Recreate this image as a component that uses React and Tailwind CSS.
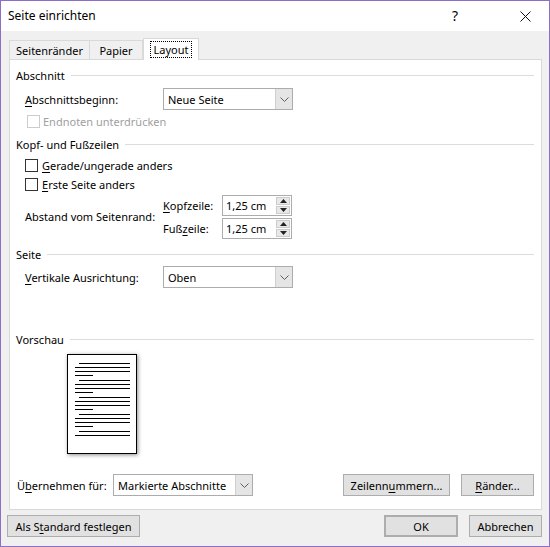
import React from "react";

function U({ children }) {
    return <span className="underline underline-offset-2">{children}</span>;
}

function Heading({ children, className = "" }) {
    return (
        <div className={"flex items-center h-[16px] " + className}>
            <span>{children}</span>
            <div className="flex-1 h-px bg-[#dcdcdc] ml-[6px]" />
        </div>
    );
}

function Chevron() {
    return (
        <svg width="9" height="5" viewBox="0 0 9 5">
            <path d="M0.5 0.5 L4.5 4.5 L8.5 0.5" fill="none" stroke="#606060" strokeWidth="1" />
        </svg>
    );
}

function Select({ value, className = "" }) {
    return (
        <div className={"flex h-[22px] border border-[#acacac] bg-white " + className}>
            <div className="flex-1 flex items-center pl-[4px]">{value}</div>
            <div className="w-[17px] flex items-center justify-center bg-[#e5e5e5] border-l border-[#d0d0d0]">
                <Chevron />
            </div>
        </div>
    );
}

function Spin({ value }) {
    return (
        <div className="flex w-[70px] h-[21px] border border-[#acacac] bg-white">
            <div className="flex-1 flex items-center pl-[3px]">{value}</div>
            <div className="w-[15px] flex flex-col gap-px py-[1px] pr-[1px]">
                <div className="flex-1 bg-[#e8e8e8] border border-[#cccccc] flex items-center justify-center">
                    <svg width="7" height="4" viewBox="0 0 7 4"><path d="M0 4 L3.5 0 L7 4 Z" fill="#222" /></svg>
                </div>
                <div className="flex-1 bg-[#e8e8e8] border border-[#cccccc] flex items-center justify-center">
                    <svg width="7" height="4" viewBox="0 0 7 4"><path d="M0 0 L3.5 4 L7 0 Z" fill="#222" /></svg>
                </div>
            </div>
        </div>
    );
}

function Check({ disabled }) {
    return (
        <div
            className={
                "w-[13px] h-[13px] border bg-white shrink-0 " +
                (disabled ? "border-[#cccccc]" : "border-[#333333]")
            }
        />
    );
}

function Button({ children, className = "" }) {
    return (
        <div
            className={
                "h-[22px] flex items-center justify-center bg-[#e1e1e1] border border-[#adadad] " +
                className
            }
        >
            {children}
        </div>
    );
}

function PreviewPage() {
    const group = (
        <div className="flex flex-col gap-[3px] mb-[4px]">
            <div className="h-px bg-black ml-[11px] w-[51px]" />
            <div className="h-px bg-black ml-[7px] w-[55px]" />
            <div className="h-px bg-black ml-[7px] w-[55px]" />
            <div className="h-px bg-black ml-[7px] w-[18px]" />
        </div>
    );
    return (
        <div className="ml-[51px] mt-[7px] w-[70px] h-[100px] border border-black bg-white shadow-[1px_1px_4px_rgba(0,0,0,0.45)] pt-[8px] overflow-hidden">
            {group}
            {group}
            {group}
            {group}
            <div className="flex flex-col gap-[3px]">
                <div className="h-px bg-black ml-[11px] w-[51px]" />
                <div className="h-px bg-black ml-[7px] w-[55px]" />
            </div>
        </div>
    );
}

export default function App() {
    return (
        <div className="w-[550px] h-[547px] border border-[#8d70c6] bg-[#f0f0f0] flex flex-col text-[11px] text-black [font-family:'Noto_Sans',sans-serif] leading-none whitespace-nowrap overflow-hidden">
            {/* Title bar */}
            <div className="h-[30px] bg-white flex items-center pl-[7px] shrink-0 text-[12px]">
                <span>Seite einrichten</span>
                <div className="flex-1" />
                <span className="text-[14px] mr-[62px]">?</span>
                <svg width="11" height="11" viewBox="0 0 11 11" className="mr-[18px]">
                    <path d="M0.5 0.5 L10.5 10.5 M10.5 0.5 L0.5 10.5" stroke="#111" strokeWidth="1" />
                </svg>
            </div>

            {/* Tabs */}
            <div className="flex items-end h-[21px] mt-[7px] ml-[8px] shrink-0">
                <div className="h-[19px] w-[81px] flex items-center justify-center border border-b-0 border-[#d9d9d9]">
                    Seitenränder
                </div>
                <div className="h-[19px] w-[53px] flex items-center justify-center border border-b-0 border-l-0 border-[#d9d9d9]">
                    Papier
                </div>
                <div className="relative z-10 -mb-px h-[22px] w-[56px] flex items-center justify-center bg-white border border-b-0 border-[#d9d9d9]">
                    <span className="border border-dotted border-black px-[3px] py-[2px]">Layout</span>
                </div>
            </div>

            {/* Panel */}
            <div className="mr-[7px] ml-[8px] bg-white border border-[#d9d9d9] pl-[6px] pr-[7px] pt-[7px] pb-[13px] shrink-0">
                <Heading>Abschnitt</Heading>
                <div className="flex items-center mt-[5px] h-[22px]">
                    <span className="ml-[9px] w-[138px]"><U>A</U>bschnittsbeginn:</span>
                    <Select value="Neue Seite" className="w-[130px]" />
                </div>
                <div className="flex items-center h-[22px] ml-[11px] gap-[3px] text-[#a0a0a0]">
                    <Check disabled />
                    <span>Endnoten unterdrücken</span>
                </div>

                <Heading className="mt-[4px]">Kopf- und Fußzeilen</Heading>
                <div className="flex items-center h-[19px] mt-[4px] ml-[9px] gap-[4px]">
                    <Check />
                    <span><U>G</U>erade/ungerade anders</span>
                </div>
                <div className="flex items-center h-[19px] ml-[9px] gap-[4px]">
                    <Check />
                    <span><U>E</U>rste Seite anders</span>
                </div>
                <div className="flex items-center mt-[1px]">
                    <span className="ml-[9px] w-[138px] -mt-[2px]">Abstand vom Seitenrand:</span>
                    <div className="flex flex-col gap-[2px]">
                        <div className="flex items-center">
                            <span className="w-[59px]"><U>K</U>opfzeile:</span>
                            <Spin value="1,25 cm" />
                        </div>
                        <div className="flex items-center">
                            <span className="w-[59px]">Fuß<U>z</U>eile:</span>
                            <Spin value="1,25 cm" />
                        </div>
                    </div>
                </div>

                <Heading className="mt-[7px]">Seite</Heading>
                <div className="flex items-center mt-[4px] h-[22px]">
                    <span className="ml-[9px] w-[138px]"><U>V</U>ertikale Ausrichtung:</span>
                    <Select value="Oben" className="w-[130px]" />
                </div>

                <Heading className="mt-[43px]">Vorschau</Heading>
                <PreviewPage />

                <div className="flex items-center mt-[20px] h-[22px]">
                    <span className="ml-[1px] w-[96px]">Ü<U>b</U>ernehmen für:</span>
                    <Select value="Markierte Abschnitte" className="w-[140px]" />
                    <div className="flex-1" />
                    <Button className="w-[107px]">Zeilenn<U>u</U>mmern...</Button>
                    <Button className="w-[73px] ml-[11px]"><U>R</U>änder...</Button>
                </div>
            </div>

            {/* Bottom buttons */}
            <div className="flex items-center mt-[5px] ml-[6px] mr-[7px] shrink-0">
                <Button className="w-[133px]">Als S<U>t</U>andard festlegen</Button>
                <div className="flex-1" />
                <Button className="w-[74px] border-2 border-[#0078d7]">OK</Button>
                <Button className="w-[73px] ml-[11px]">Abbrechen</Button>
            </div>
        </div>
    );
}
